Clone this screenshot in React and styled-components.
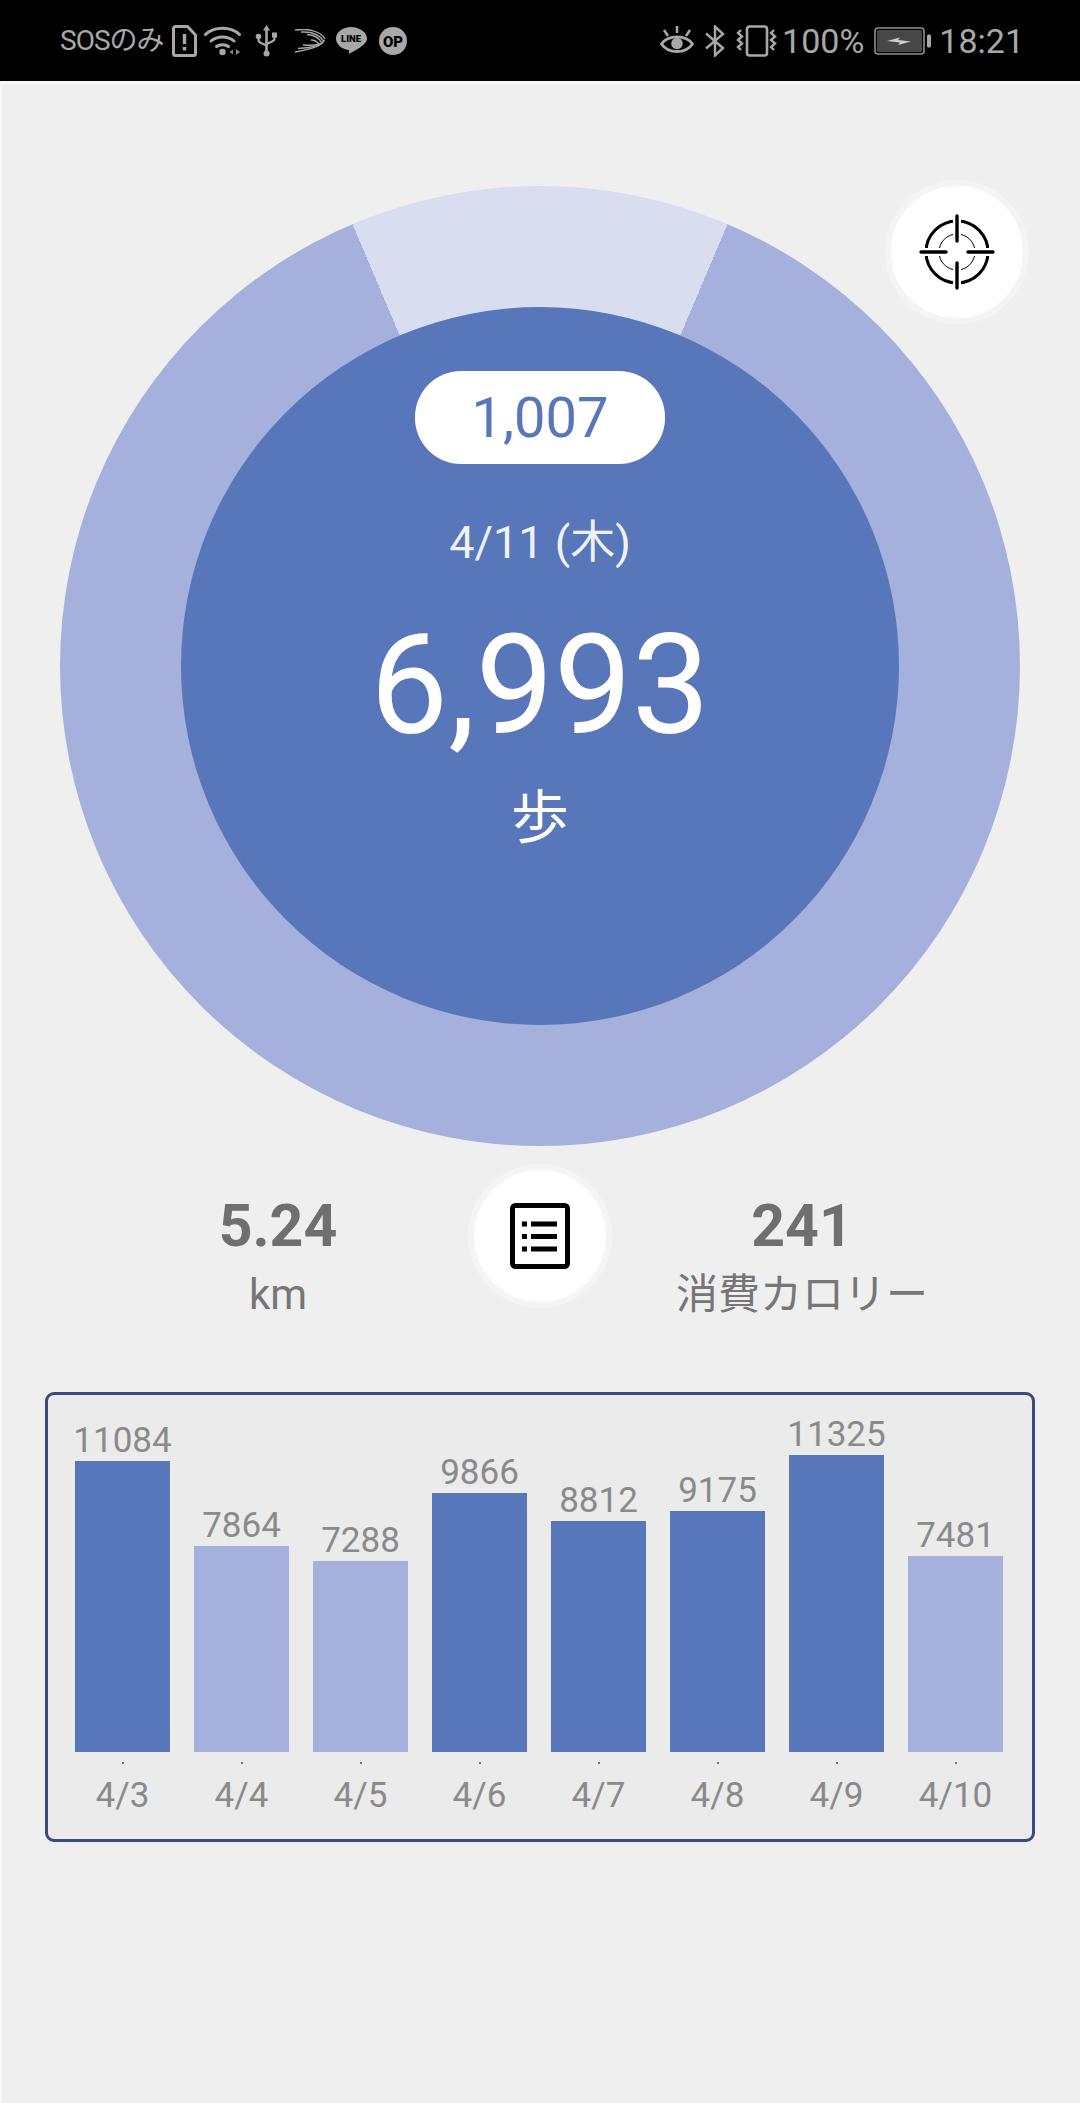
import styled, { createGlobalStyle } from "styled-components";

const BLUE = "#5876ba";
const LIGHT_BLUE = "#a5b0dd";

const weekData = [
  { day: "4/3", steps: 11084 },
  { day: "4/4", steps: 7864 },
  { day: "4/5", steps: 7288 },
  { day: "4/6", steps: 9866 },
  { day: "4/7", steps: 8812 },
  { day: "4/8", steps: 9175 },
  { day: "4/9", steps: 11325 },
  { day: "4/10", steps: 7481 },
];

const GlobalStyle = createGlobalStyle`
  html, body {
    margin: 0;
    padding: 0;
    background: #efefef;
  }
  body {
    font-family: Roboto, "Noto Sans CJK JP", sans-serif;
  }
`;

const Page = styled.div`
  display: flex;
  flex-direction: column;
  min-height: 100vh;
  background: #efefef;
`;

const StatusBar = styled.header`
  display: flex;
  align-items: center;
  justify-content: space-between;
  height: 81px;
  padding: 0 56px 0 60px;
  box-sizing: border-box;
  background: #000;
  color: #a8a8a8;
`;

const StatusGroup = styled.div`
  display: flex;
  align-items: center;
`;

const StatusText = styled.span`
  font-size: ${(props) => props.$size || 34}px;
  letter-spacing: ${(props) => props.$tracking || 0}px;
  line-height: 1;
  margin-left: ${(props) => props.$ml || 0}px;
  white-space: nowrap;
`;

const StatusIcon = styled.svg`
  display: block;
  flex: none;
  margin-left: ${(props) => props.$ml || 0}px;
`;

const Main = styled.main`
  flex: 1;
  padding-top: 105px;
  box-shadow: inset 2px 3px 0 #f6f6f6;
`;

const Ring = styled.section`
  position: relative;
  display: flex;
  align-items: center;
  justify-content: center;
  width: 960px;
  height: 960px;
  margin: 0 auto;
  border-radius: 50%;
  background: conic-gradient(
    #d8ddf0 0deg 23deg,
    ${LIGHT_BLUE} 23deg 337deg,
    #d8ddf0 337deg 360deg
  );
`;

const Dial = styled.div`
  display: flex;
  flex-direction: column;
  align-items: center;
  width: 718px;
  height: 718px;
  padding-top: 64px;
  box-sizing: border-box;
  border-radius: 50%;
  background: ${BLUE};
  color: #fff;
`;

const Pill = styled.div`
  display: flex;
  align-items: center;
  justify-content: center;
  width: 250px;
  height: 93px;
  border-radius: 46px;
  background: #fff;
  color: ${BLUE};
  font-size: 56px;
`;

const DateLabel = styled.div`
  margin-top: 50px;
  font-size: 45px;
  line-height: 58px;
  color: #f0f2fa;
`;

const StepCount = styled.div`
  margin-top: 34px;
  font-size: 139px;
  line-height: 160px;
`;

const StepUnit = styled.div`
  margin-top: 17px;
  font-size: 58px;
  line-height: 70px;
`;

const RoundButton = styled.button`
  display: flex;
  align-items: center;
  justify-content: center;
  flex: none;
  width: 144px;
  height: 144px;
  padding: 0;
  box-sizing: border-box;
  border: 6px solid #f4f4f4;
  border-radius: 50%;
  background: #fff;
`;

const TargetButton = styled(RoundButton)`
  position: absolute;
  top: -6px;
  right: -9px;
`;

const StatsRow = styled.section`
  display: grid;
  grid-template-columns: 1fr 144px 1fr;
  align-items: start;
  margin-top: 18px;
  padding: 0 88px;
`;

const Stat = styled.div`
  display: flex;
  flex-direction: column;
  align-items: center;
  padding-top: 27px;
  color: #6f6f6f;
`;

const StatValue = styled.div`
  font-size: 59px;
  font-weight: 700;
  line-height: 70px;
`;

const StatLabel = styled.div`
  margin-top: 6px;
  font-size: 42px;
  line-height: 56px;
  color: #767676;
  white-space: nowrap;
`;

const ChartBox = styled.section`
  display: flex;
  justify-content: center;
  align-items: flex-end;
  gap: 24px;
  height: 450px;
  margin: 69px 45px 0;
  padding: 0 2px 23px 0;
  box-sizing: border-box;
  border: 3px solid #3a4a80;
  border-radius: 9px;
  background: #ebebeb;
`;

const Column = styled.div`
  display: flex;
  flex-direction: column;
  align-items: center;
  width: 95px;
  font-size: 35px;
  color: #8a8a8a;
`;

const BarValue = styled.div`
  line-height: 41px;
  white-space: nowrap;
`;

const Bar = styled.div`
  width: 100%;
  background: ${(props) => (props.$over ? BLUE : LIGHT_BLUE)};
`;

const Tick = styled.div`
  width: 2px;
  height: 2px;
  margin: 10px 0 12px;
  background: #777;
`;

const DayLabel = styled.div`
  line-height: 40px;
  white-space: nowrap;
`;

function TargetIcon() {
  const arms = "M0 -36V-11M0 36V11M-36 0H-11M36 0H11";
  return (
    <svg width="80" height="80" viewBox="-40 -40 80 80" fill="none">
      <circle r="31" stroke="#000" strokeWidth="3" />
      <circle r="18" stroke="#000" strokeWidth="1" />
      <path d={arms} stroke="#fff" strokeWidth="8" />
      <path d={arms} stroke="#000" strokeWidth="3.4" strokeLinecap="round" />
    </svg>
  );
}

function ListIcon() {
  return (
    <svg width="60" height="66" viewBox="0 0 60 66" fill="none">
      <rect x="2.5" y="2.5" width="55" height="61" rx="3" stroke="#000" strokeWidth="5" />
      <path d="M12 21h5M12 33.5h5M12 46h5" stroke="#000" strokeWidth="5" />
      <path d="M21 21h26M21 33.5h26M21 46h26" stroke="#000" strokeWidth="5" />
    </svg>
  );
}

function SimAlertIcon() {
  return (
    <StatusIcon $ml={8} width="25" height="32" viewBox="0 0 25 32" fill="none">
      <path
        d="M3.5 1.5h12l8 8.5v18.5a2 2 0 0 1-2 2h-18a2 2 0 0 1-2-2v-25a2 2 0 0 1 2-2z"
        stroke="#a8a8a8"
        strokeWidth="3"
        strokeLinejoin="round"
      />
      <path d="M12.5 9v10M12.5 22v3.5" stroke="#a8a8a8" strokeWidth="3.4" />
    </StatusIcon>
  );
}

function WifiIcon() {
  return (
    <StatusIcon $ml={7} width="38" height="31" viewBox="0 0 38 31" fill="none">
      <path d="M1.5 9.5C10 1 27 1 35.5 9.5" stroke="#a8a8a8" strokeWidth="3" strokeLinecap="round" />
      <path d="M7 16C13 10.5 24 10.5 30 16" stroke="#a8a8a8" strokeWidth="3" strokeLinecap="round" />
      <path d="M12.5 21.5C15.5 19 21.5 19 24.5 21.5" stroke="#a8a8a8" strokeWidth="3" strokeLinecap="round" />
      <circle cx="18.5" cy="27" r="3.2" fill="#a8a8a8" />
      <path d="M29 24.5v5l-3.5-2.5zM32 24v6l4-3z" fill="#8a8a8a" />
    </StatusIcon>
  );
}

function UsbIcon() {
  return (
    <StatusIcon $ml={13} width="23" height="33" viewBox="0 0 23 33" fill="none">
      <path d="M11.5 1l-3.6 5.5h7.2z" fill="#a8a8a8" />
      <path d="M11.5 5v24" stroke="#a8a8a8" strokeWidth="2.6" />
      <path d="M3.5 13v2.5c0 2 1 3 2.5 3.6l5.5 2.4M19.5 11v3c0 2-1 3-2.5 3.6l-5.5 2.4" stroke="#a8a8a8" strokeWidth="2.2" />
      <circle cx="3.5" cy="12.5" r="2.8" fill="#a8a8a8" />
      <rect x="17" y="8.5" width="5" height="5" fill="#a8a8a8" />
      <circle cx="11.5" cy="29.5" r="3" fill="#a8a8a8" />
    </StatusIcon>
  );
}

function SwiftKeyIcon() {
  return (
    <StatusIcon $ml={16} width="32" height="24" viewBox="0 0 32 24" fill="none" stroke="#a8a8a8" strokeWidth="1.4">
      <path d="M1 1C12-.5 26 1 31 10" />
      <path d="M7 3C16 2.5 25 5 29.5 12" />
      <path d="M13 5.5C20 6 25 8.5 28 14" />
      <path d="M17 11C20 11 23 12.5 25 15" />
      <path d="M30.5 11C28 17 14 21 1 23" />
      <path d="M28.5 13.5C24 17.5 14 19 4 19.5" />
      <path d="M26 15C21 16.5 15 16.5 9 16" />
    </StatusIcon>
  );
}

function LineIcon() {
  return (
    <StatusIcon $ml={9} width="32" height="30" viewBox="0 0 32 30">
      <path
        d="M16 1C7.7 1 1 6.2 1 12.6c0 5.7 5.3 10.5 12.4 11.4.9.2.8 1.2.6 2.8-.1.7.4 1 1.1.6 3.5-2 16.9-8.2 16.9-14.8C32 6.2 24.3 1 16 1z"
        fill="#a8a8a8"
      />
      <text x="16" y="16" textAnchor="middle" fontFamily="Roboto, sans-serif" fontSize="9.5" fontWeight="900" fill="#000">
        LINE
      </text>
    </StatusIcon>
  );
}

function OpIcon() {
  return (
    <StatusIcon $ml={12} width="28" height="28" viewBox="0 0 28 28">
      <circle cx="14" cy="14" r="14" fill="#a8a8a8" />
      <text x="14" y="19.5" textAnchor="middle" fontFamily="Roboto, sans-serif" fontSize="15" fontWeight="900" fill="#000">
        OP
      </text>
    </StatusIcon>
  );
}

function EyeIcon() {
  return (
    <StatusIcon width="34" height="31" viewBox="0 0 34 31" fill="none">
      <path d="M1.5 19C8 9.5 26 9.5 32.5 19 26 29 8 29 1.5 19z" stroke="#a8a8a8" strokeWidth="2.8" />
      <circle cx="17" cy="18.5" r="5.8" fill="#a8a8a8" />
      <path d="M17 1v7M4 5l4 6M30 5l-4 6" stroke="#a8a8a8" strokeWidth="2.5" />
    </StatusIcon>
  );
}

function BluetoothIcon() {
  return (
    <StatusIcon $ml={11} width="20" height="32" viewBox="0 0 20 32" fill="none">
      <path d="M1 8.5L18 23 10 30.5V1.5L18 9 1 23.5" stroke="#a8a8a8" strokeWidth="2.4" />
    </StatusIcon>
  );
}

function VibrateIcon() {
  return (
    <StatusIcon $ml={11} width="44" height="32" viewBox="0 0 44 32" fill="none">
      <rect x="11" y="1.5" width="20" height="29" rx="2.5" stroke="#a8a8a8" strokeWidth="2.6" />
      <path d="M5 5l-3 3 4 3.5-4 3.5 4 3.5-4 3.5 3 3" stroke="#a8a8a8" strokeWidth="2.4" />
      <path d="M38 5l-3 3 4 3.5-4 3.5 4 3.5-4 3.5 3 3" stroke="#a8a8a8" strokeWidth="2.4" />
    </StatusIcon>
  );
}

function BatteryIcon() {
  return (
    <StatusIcon $ml={10} width="58" height="28" viewBox="0 0 58 28" fill="none">
      <rect x="1" y="1" width="49" height="26" rx="3" stroke="#8f8f8f" strokeWidth="1.6" />
      <rect x="3" y="3" width="45" height="22" rx="1.5" fill="#474747" />
      <path d="M13 14l13-3.5-2 2.5 13 1.5-13 3.500 2-2.500z" fill="#d0d0d0" />
      <rect x="53" y="7.5" width="4" height="13" rx="1.5" fill="#a8a8a8" />
    </StatusIcon>
  );
}

export default function App() {
  return (
    <Page>
      <GlobalStyle />
      <StatusBar>
        <StatusGroup>
          <StatusText $size={28} $tracking={-1}>SOSのみ</StatusText>
          <SimAlertIcon />
          <WifiIcon />
          <UsbIcon />
          <SwiftKeyIcon />
          <LineIcon />
          <OpIcon />
        </StatusGroup>
        <StatusGroup>
          <EyeIcon />
          <BluetoothIcon />
          <VibrateIcon />
          <StatusText $ml={2}>100%</StatusText>
          <BatteryIcon />
          <StatusText $ml={7}>18:21</StatusText>
        </StatusGroup>
      </StatusBar>
      <Main>
        <Ring>
          <Dial>
            <Pill>1,007</Pill>
            <DateLabel>4/11 (木)</DateLabel>
            <StepCount>6,993</StepCount>
            <StepUnit>歩</StepUnit>
          </Dial>
          <TargetButton>
            <TargetIcon />
          </TargetButton>
        </Ring>
        <StatsRow>
          <Stat>
            <StatValue>5.24</StatValue>
            <StatLabel>km</StatLabel>
          </Stat>
          <RoundButton>
            <ListIcon />
          </RoundButton>
          <Stat>
            <StatValue>241</StatValue>
            <StatLabel>消費カロリー</StatLabel>
          </Stat>
        </StatsRow>
        <ChartBox>
          {weekData.map((item) => (
            <Column key={item.day}>
              <BarValue>{item.steps}</BarValue>
              <Bar $over={item.steps >= 8000} style={{ height: item.steps * 0.02625 }} />
              <Tick />
              <DayLabel>{item.day}</DayLabel>
            </Column>
          ))}
        </ChartBox>
      </Main>
    </Page>
  );
}
